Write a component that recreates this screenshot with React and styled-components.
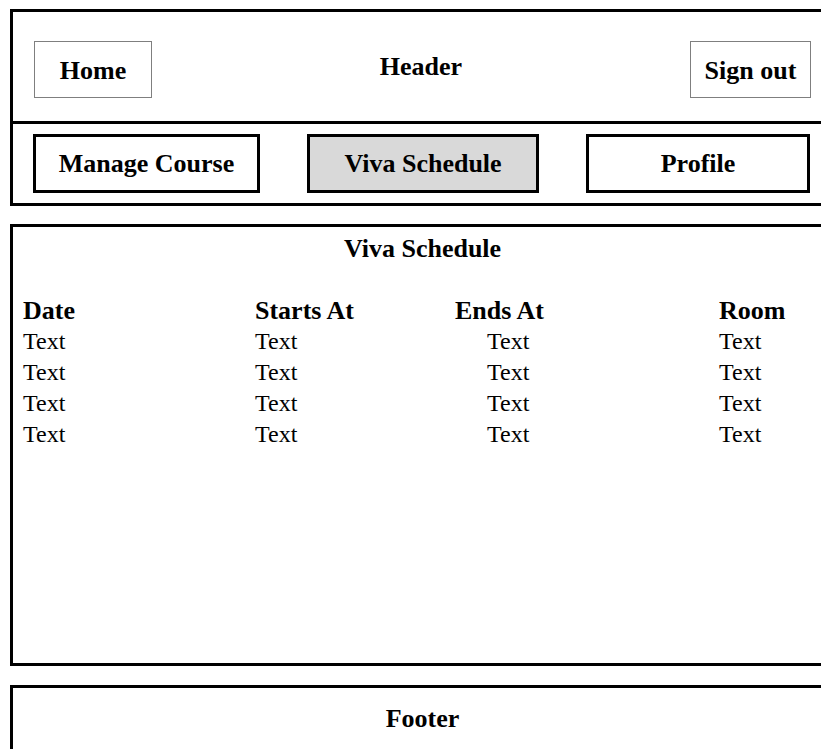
import React from "react";
import styled, { createGlobalStyle } from "styled-components";

const GlobalStyle = createGlobalStyle`
  html,
  body {
    margin: 0;
    padding: 0;
    overflow: hidden;
    background: #ffffff;
  }
  body {
    font-family: "Liberation Serif", "Times New Roman", serif;
    color: #000000;
  }
`;

const Page = styled.div`
  padding: 9px 0 0 10px;
  width: 825px;
`;

const Box = styled.div`
  box-sizing: border-box;
  width: 825px;
  border: 3px solid #000000;
  background: #ffffff;
`;

const HeaderBox = styled(Box)``;

const TopBar = styled.div`
  display: grid;
  grid-template-columns: 118px 1fr 121px;
  align-items: start;
  padding: 29px 21px 23px 21px;
  border-bottom: 3px solid #000000;
`;

const Title = styled.div`
  font-size: 26px;
  font-weight: 700;
  line-height: 30px;
  text-align: center;
`;

const HeaderTitle = styled(Title)`
  align-self: center;
  margin-bottom: 5px;
`;

const OutlineButton = styled.div`
  box-sizing: border-box;
  height: 57px;
  border: 1px solid #7f7f7f;
  display: flex;
  align-items: center;
  justify-content: center;
  padding-top: 3px;
  font-size: 26px;
  font-weight: 700;
`;

const NavBar = styled.div`
  display: flex;
  justify-content: space-between;
  padding: 10px 22px 10px 20px;
`;

const NavButton = styled.div`
  box-sizing: border-box;
  width: ${(p) => p.$w}px;
  height: 59px;
  border: 3px solid #000000;
  background: ${(p) => (p.$active ? "#d9d9d9" : "#ffffff")};
  display: flex;
  align-items: center;
  justify-content: center;
  padding-top: 1px;
  font-size: 26px;
  font-weight: 700;
`;

const MainBox = styled(Box)`
  margin-top: 18px;
  height: 442px;
  padding-top: 7px;
`;

const Table = styled.div`
  display: grid;
  grid-template-columns: 232px 200px 264px 1fr;
  margin-top: 31px;
  padding-left: 10px;
  line-height: 31px;
`;

const HeadCell = styled.div`
  font-size: 26px;
  font-weight: 700;
`;

const Cell = styled.div`
  font-size: 24px;
  padding-left: ${(p) => p.$indent || 0}px;
`;

const FooterBox = styled(Box)`
  margin-top: 19px;
  height: 120px;
  padding-top: 16px;
`;

const columns = [
  { label: "Date", indent: 0 },
  { label: "Starts At", indent: 0 },
  { label: "Ends At", indent: 32 },
  { label: "Room", indent: 0 },
];

const rows = [1, 2, 3, 4];

const App = () => {
  return (
    <>
      <GlobalStyle />
      <Page>
        <HeaderBox>
          <TopBar>
            <OutlineButton>Home</OutlineButton>
            <HeaderTitle>Header</HeaderTitle>
            <OutlineButton>Sign out</OutlineButton>
          </TopBar>
          <NavBar>
            <NavButton $w={227}>Manage Course</NavButton>
            <NavButton $w={232} $active>
              Viva Schedule
            </NavButton>
            <NavButton $w={224}>Profile</NavButton>
          </NavBar>
        </HeaderBox>

        <MainBox>
          <Title>Viva Schedule</Title>
          <Table>
            {columns.map((c) => (
              <HeadCell key={c.label}>{c.label}</HeadCell>
            ))}
            {rows.map((r) =>
              columns.map((c) => (
                <Cell key={`${r}-${c.label}`} $indent={c.indent}>
                  Text
                </Cell>
              ))
            )}
          </Table>
        </MainBox>

        <FooterBox>
          <Title>Footer</Title>
        </FooterBox>
      </Page>
    </>
  );
};

export default App;
